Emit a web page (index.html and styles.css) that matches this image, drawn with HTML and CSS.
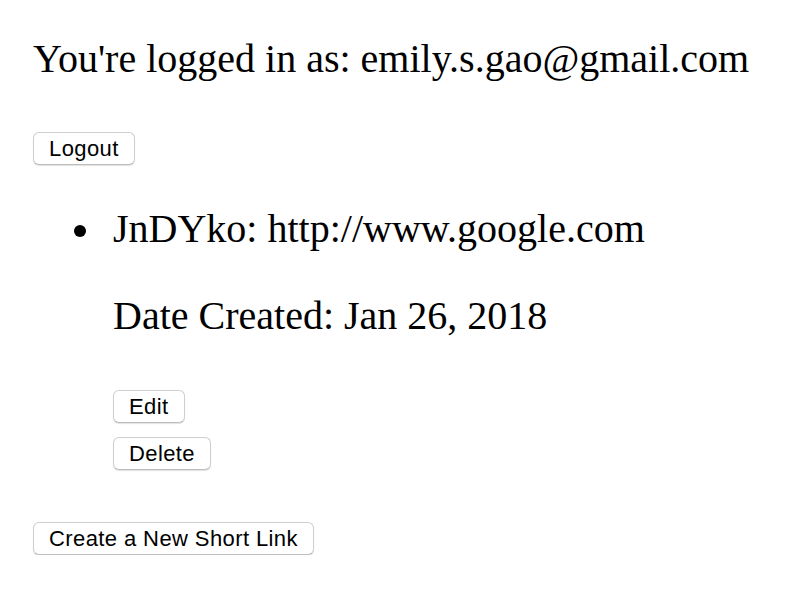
FILE: index.html
```html
<!DOCTYPE html>
<html>
<head>
<meta charset="utf-8">
<link rel="stylesheet" href="styles.css">
</head>
<body>
<div class="page">
  <p class="user">You're logged in as: emily.s.gao@gmail.com</p>
  <div class="row logout-row"><button class="btn">Logout</button></div>
  <ul class="links">
    <li class="link">
      <span class="bullet"></span>
      <div class="body">
        <p class="line">JnDYko: http://www.google.com</p>
        <p class="line date">Date Created: Jan 26, 2018</p>
        <div class="actions">
          <button class="btn">Edit</button>
          <button class="btn">Delete</button>
        </div>
      </div>
    </li>
  </ul>
  <div class="row create-row"><button class="btn">Create a New Short Link</button></div>
</div>
</body>
</html>
```
FILE: styles.css
```css
html, body {
  margin: 0;
  padding: 0;
  background: #ffffff;
}
.page {
  padding: 36px 33px 0 33px;
  font-family: "Liberation Serif", "Times New Roman", serif;
  color: #000;
}
.user {
  margin: 0;
  font-size: 40px;
  line-height: 46px;
}
.row {
  display: flex;
}
.logout-row {
  margin-top: 50px;
}
.links {
  margin: 41px 0 0 0;
  padding-left: 39px;
  font-size: 40px;
  list-style: none;
}
.link {
  display: grid;
  grid-template-columns: 41px 1fr;
  align-items: start;
}
.bullet {
  width: 12px;
  height: 12px;
  border-radius: 50%;
  background: #000;
  margin: 19px 0 0 2px;
}
.line {
  margin: 0;
  line-height: 46px;
}
.date {
  margin-top: 41px;
}
.actions {
  display: flex;
  flex-direction: column;
  align-items: flex-start;
  gap: 14px;
  margin-top: 51px;
}
.btn {
  font-family: "Liberation Sans", Arial, sans-serif;
  font-size: 22px;
  line-height: 27px;
  letter-spacing: 0.4px;
  color: #000;
  background: #fff;
  border: 1px solid #cfcfcf;
  border-bottom-color: #bdbdbd;
  border-radius: 6px;
  box-shadow: 0 1px 1px rgba(0, 0, 0, 0.12);
  padding: 2px 15px 2px 15px;
  margin: 0;
}
.create-row {
  margin-top: 52px;
}
```
